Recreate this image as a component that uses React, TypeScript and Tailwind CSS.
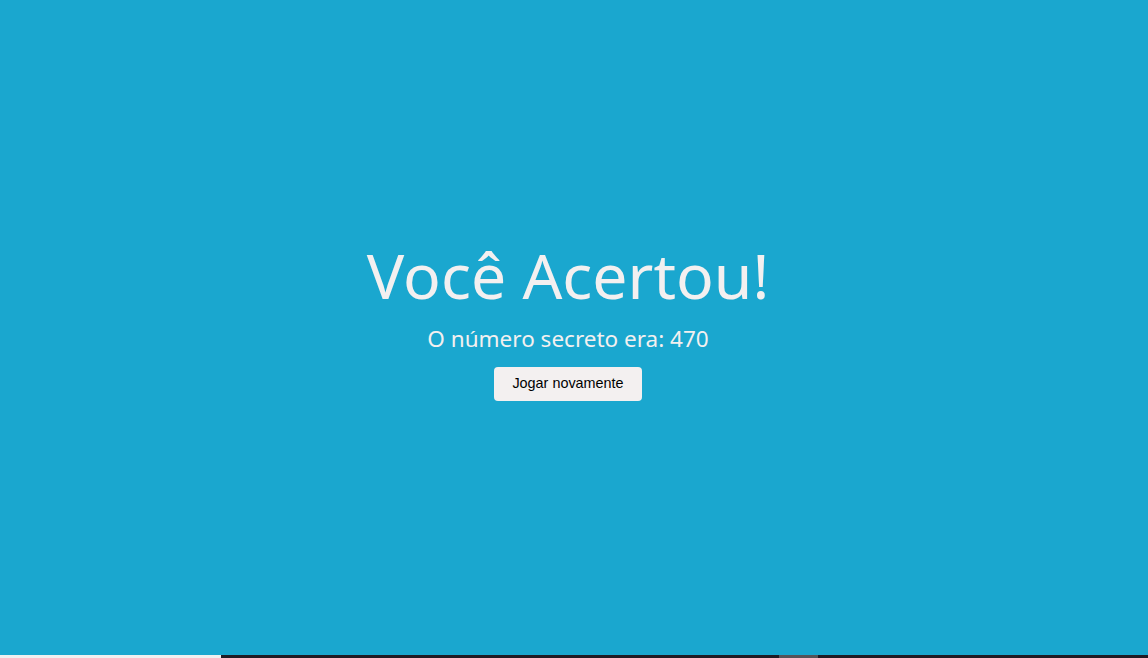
export default function App() {
  return (
    <div className="w-full h-[658px] flex flex-col bg-[#1aa7cf] overflow-hidden">
      <main className="flex-1 flex flex-col items-center justify-center pb-[18px] pr-[12px]" style={{ fontFamily: '"Noto Sans", sans-serif' }}>
        <h1 className="text-[62.5px] leading-[76px] font-normal text-[#f3f0f0]">Você Acertou!</h1>
        <p className="mt-[11px] text-[22.5px] leading-[30px] text-[#f3f0f0]">O número secreto era: 470</p>
        <button
          className="mt-[13px] w-[148px] h-[34px] rounded-[4px] bg-[#f3f0f0] text-[14.4px] text-black"
          style={{ fontFamily: '"Liberation Sans", Arial, sans-serif' }}
        >
          Jogar novamente
        </button>
      </main>
      <div className="h-[3px] flex">
        <div className="w-[221px] bg-[#f0f0f0]" />
        <div className="w-[558px] bg-[#1f1b24]" />
        <div className="w-[39px] bg-[#555358]" />
        <div className="flex-1 bg-[#1f1b24]" />
      </div>
    </div>
  )
}
